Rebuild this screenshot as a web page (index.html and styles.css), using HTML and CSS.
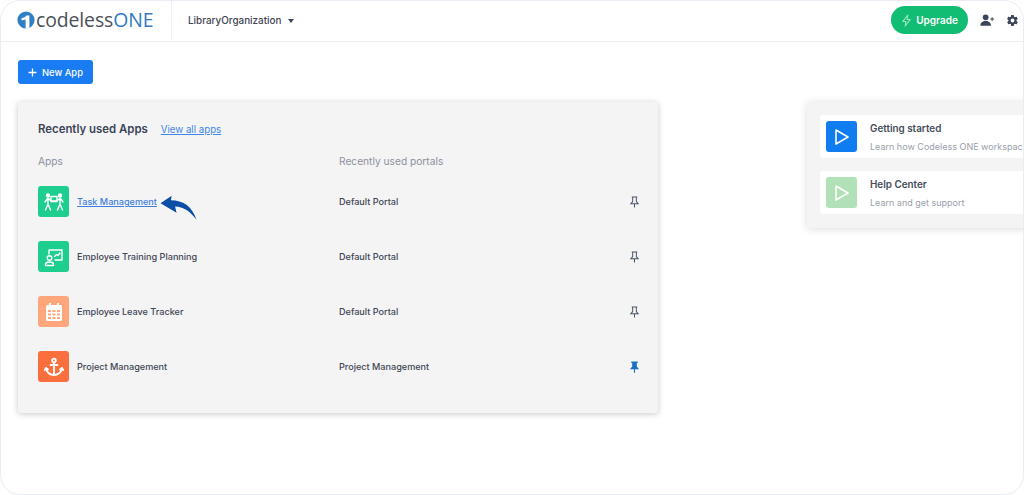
FILE: index.html
```html
<!DOCTYPE html>
<html lang="en">
<head>
<meta charset="utf-8">
<title>Codeless ONE</title>
<link rel="stylesheet" href="styles.css">
</head>
<body>
<div class="frame">
  <header class="topbar">
    <div class="logo">
      <svg class="logo-mark" viewBox="0 0 18 18"><circle cx="9" cy="9" r="8.6" fill="#2f7fc4"/><path d="M4.5 7.2 Q8 6.6 9.6 4.4 H12.4 V17.4 H8.6 V8.6 Q6.5 9.3 4.5 9.2Z" fill="#fff"/></svg>
      <span class="logo-text">codeless<span class="logo-one">ONE</span></span>
    </div>
    <div class="org">
      <span class="org-name">LibraryOrganization</span>
      <span class="caret"></span>
    </div>
    <div class="top-actions">
      <button class="upgrade">
        <svg class="bolt" viewBox="0 0 12 14"><path d="M7.5 1 2 8h3.5L4.5 13 10 6H6.5Z" fill="none" stroke="#9fe8c4" stroke-width="1.1" stroke-linejoin="round"/></svg>
        Upgrade
      </button>
      <svg class="user-add" viewBox="0 0 16 13"><circle cx="6" cy="3.6" r="3.1" fill="#3b4558"/><path d="M0.3 12.6c0-3.3 2.4-5 5.7-5s5.700 1.700 5.700 5Z" fill="#3b4558"/><path d="M13 3.5v4M11 5.5h4" stroke="#3b4558" stroke-width="1.1"/></svg>
      <svg class="gear" viewBox="0 0 24 24"><path fill="#3b4558" fill-rule="evenodd" d="M19.4 13c.1-.3.1-.7.1-1s0-.7-.1-1l2.100-1.600c.2-.2.2-.4.1-.6l-2-3.500c-.1-.2-.4-.3-.6-.2l-2.500 1c-.5-.4-1.100-.7-1.700-1l-.4-2.600c0-.3-.2-.5-.5-.5h-4c-.3 0-.5.2-.5.5l-.4 2.600c-.6.3-1.200.6-1.700 1l-2.500-1c-.2-.1-.5 0-.6.2l-2 3.500c-.1.2-.1.4.1.6L4.500 11c-.1.3-.1.7-.1 1s0 .7.1 1l-2.100 1.600c-.2.2-.2.4-.1.6l2 3.500c.1.2.4.3.6.2l2.500-1c.5.4 1.100.7 1.700 1l.4 2.600c0 .3.2.5.5.5h4c.3 0 .5-.2.5-.5l.4-2.600c.6-.3 1.200-.6 1.700-1l2.500 1c.2.1.5 0 .6-.2l2-3.500c.1-.2.1-.4-.1-.6ZM12 15.500a3.500 3.500 0 1 1 0-7 3.500 3.500 0 0 1 0 7Z"/></svg>
    </div>
  </header>

  <main class="content">
    <button class="new-app"><svg class="plus" viewBox="0 0 9 9"><path d="M4.500 .5v8M.5 4.500h8" stroke="#fff" stroke-width="1.300"/></svg>New App</button>

    <div class="panels">
      <section class="card">
        <div class="card-head">
          <h2 class="card-title">Recently used Apps</h2>
          <a class="view-all" href="#">View all apps</a>
        </div>
        <div class="row labels">
          <span class="col-app">Apps</span>
          <span class="col-portal">Recently used portals</span>
        </div>

        <div class="row app">
          <div class="col-app">
            <span class="tile tile-green">
              <svg viewBox="0 0 20 20" fill="none" stroke="#fff" stroke-width="1.400" stroke-linecap="round" stroke-linejoin="round"><circle cx="4" cy="3.500" r="1.500" fill="#fff"/><circle cx="16" cy="3.500" r="1.500" fill="#fff"/><path d="M1 10l2.500-3.500h1L7 9h6l2.500-2.500h1L19 10M4 7v5l-2.500 6M4 12l2.500 6M16 7v5l-2.500 6M16 12l2.500 6"/><rect x="7" y="4.500" width="6" height="5"/></svg>
            </span>
            <a class="app-link" href="#">Task Management</a>
            <svg class="arrow" viewBox="0 0 38 26"><path fill="#0d4ea6" d="M0.500 8 12 0.500l-.8 4.600C23 5 33 11 37.500 25 30 15.500 24 12 15.500 11.500L17 18Z"/></svg>
          </div>
          <span class="col-portal">Default Portal</span>
          <svg class="pin" viewBox="0 0 12 13"><path d="M3 1h6M4 1v5L2 8.500h8L8 6V1M6 8.500V12.500" fill="none" stroke="#4a5568" stroke-width="1.100"/></svg>
        </div>

        <div class="row app">
          <div class="col-app">
            <span class="tile tile-green">
              <svg viewBox="0 0 20 20" fill="none" stroke="#fff" stroke-width="1.400" stroke-linecap="round" stroke-linejoin="round"><path d="M5 7V3h13v10h-7"/><path d="M10.500 9.500l2-2 1.500 1 2-2.500"/><circle cx="5.500" cy="11" r="2.300"/><path d="M1.500 18.500v-1c0-1.500 1.500-2.500 4-2.500s4 1 4 2.500v1Z"/></svg>
            </span>
            <span class="app-name">Employee Training Planning</span>
          </div>
          <span class="col-portal">Default Portal</span>
          <svg class="pin" viewBox="0 0 12 13"><path d="M3 1h6M4 1v5L2 8.500h8L8 6V1M6 8.500V12.500" fill="none" stroke="#4a5568" stroke-width="1.100"/></svg>
        </div>

        <div class="row app">
          <div class="col-app">
            <span class="tile tile-peach">
              <svg viewBox="0 0 20 20"><path fill="#fff" fill-rule="evenodd" d="M5 1h2v2h6V1h2v2h1.500A1.500 1.500 0 0 1 18 4.500v13a1.500 1.500 0 0 1-1.500 1.500h-13A1.500 1.500 0 0 1 2 17.500v-13A1.500 1.500 0 0 1 3.500 3H5ZM4 8v2h3V8Zm4.500 0v2h3V8ZM13 8v2h3V8ZM4 11.500v2h3v-2Zm4.500 0v2h3v-2Zm4.500 0v2h3v-2ZM4 15v2h3v-2Zm4.500 0v2h3v-2Zm4.500 0v2h3v-2Z"/></svg>
            </span>
            <span class="app-name">Employee Leave Tracker</span>
          </div>
          <span class="col-portal">Default Portal</span>
          <svg class="pin" viewBox="0 0 12 13"><path d="M3 1h6M4 1v5L2 8.500h8L8 6V1M6 8.500V12.500" fill="none" stroke="#4a5568" stroke-width="1.100"/></svg>
        </div>

        <div class="row app">
          <div class="col-app">
            <span class="tile tile-orange">
              <svg viewBox="0 0 20 20" fill="none" stroke="#fff" stroke-width="1.800" stroke-linecap="round" stroke-linejoin="round"><circle cx="10" cy="3.500" r="1.800"/><path d="M10 5.500V18M6.500 8h7M2 11c0 4 4 7 8 7s8-3 8-7M2 11l-1.200 2M2 11l2 1.500M18 11l1.200 2M18 11l-2 1.500"/></svg>
            </span>
            <span class="app-name">Project Management</span>
          </div>
          <span class="col-portal">Project Management</span>
          <svg class="pin" viewBox="0 0 12 13"><path d="M2.500 .500h7v1.500H8.500V6l2.500 3H1l2.500-3V2H2.500ZM5.400 9h1.200v3.700H5.400Z" fill="#1a6fc4"/></svg>
        </div>
      </section>

      <aside class="help">
        <div class="help-item">
          <span class="help-tile help-blue"><svg viewBox="0 0 16 18"><path d="M2 2 14 9 2 16Z" fill="none" stroke="#fff" stroke-width="1.600" stroke-linejoin="round"/></svg></span>
          <div class="help-text">
            <div class="help-title">Getting started</div>
            <div class="help-sub">Learn how Codeless ONE workspace</div>
          </div>
        </div>
        <div class="help-item">
          <span class="help-tile help-mint"><svg viewBox="0 0 16 18"><path d="M2 2 14 9 2 16Z" fill="none" stroke="#fff" stroke-width="1.600" stroke-linejoin="round"/></svg></span>
          <div class="help-text">
            <div class="help-title">Help Center</div>
            <div class="help-sub">Learn and get support</div>
          </div>
        </div>
      </aside>
    </div>
  </main>
</div>
</body>
</html>
```
FILE: styles.css
```css
* { box-sizing: border-box; }
html, body { margin: 0; padding: 0; background: #fff; }
body { font-family: Inter, "Noto Sans", sans-serif; color: #3b4558; width: 1024px; height: 495px; overflow: hidden; }

.frame {
  width: 1024px;
  height: 495px;
  border: 1px solid #e9ecf2;
  border-radius: 20px;
  overflow: hidden;
  background: #fff;
}

.topbar {
  height: 42px;
  margin-top: -1px;
  border-bottom: 1px solid #eef0f3;
  display: flex;
  align-items: center;
  padding: 0 0 1px 16px;
}
.logo { display: flex; align-items: center; width: 155px; height: 100%; flex-shrink: 0; border-right: 1px solid #f1f2f4; margin-right: 16px; }
.logo-mark { width: 18px; height: 18px; margin-right: 1px; flex-shrink: 0; }
.logo-text { font-family: "Open Sans", Lato, sans-serif; font-size: 19.4px; line-height: 18px; color: #4b4f57; letter-spacing: -0.1px; }
.logo-one { color: #2f79c7; }
.org { display: flex; align-items: center; gap: 7px; }
.org-name { font-size: 9.9px; font-weight: 500; color: #3f4654; }
.caret { width: 0; height: 0; border-left: 3.5px solid transparent; border-right: 3.5px solid transparent; border-top: 4px solid #3f4654; margin-top: 1px; }

.top-actions { margin-left: auto; display: flex; align-items: center; }
.upgrade {
  width: 77px;
  height: 28px;
  margin-right: 12px;
  background: #10bd73;
  color: #fff;
  border: 0;
  border-radius: 14px;
  font: 600 10px Inter, sans-serif;
  display: flex;
  align-items: center;
  justify-content: center;
  gap: 4px;
  padding: 0;
}
.bolt { width: 11px; height: 13px; }
.user-add { width: 15px; height: 12px; margin-right: 11px; }
.gear { width: 13px; height: 13px; margin-right: 4px; }

.content { padding: 18px 0 0 17px; }
.new-app {
  height: 24px;
  width: 75px;
  background: #1a7cf2;
  color: #fff;
  border: 0;
  border-radius: 3px;
  font: 500 9.4px Inter, sans-serif;
  display: flex;
  align-items: center;
  padding: 0 0 0 10px;
  gap: 5px;
}
.plus { width: 9px; height: 9px; }

.panels { display: flex; align-items: flex-start; margin-top: 18px; gap: 149px; }

.card {
  width: 640px;
  height: 311px;
  flex-shrink: 0;
  background: #f4f4f5;
  border-radius: 3px;
  box-shadow: 0 1px 6px rgba(0, 0, 0, .22);
  padding: 20px 18px 0 20px;
}
.card-head { display: flex; align-items: center; height: 14px; gap: 13px; }
.card-title { margin: 0; font-size: 11.4px; font-weight: 600; color: #3b4558; }
.view-all { font-size: 9.7px; color: #3f87ea; text-decoration: underline; }

.row { display: flex; align-items: center; }
.labels { margin-top: 18px; height: 14px; font-size: 10.2px; color: #8b919c; margin-bottom: 6px; }
.col-app { width: 301px; flex-shrink: 0; display: flex; align-items: center; }
.col-portal { flex: 1; }
.app { height: 55px; font-size: 9.1px; font-weight: 500; color: #3f4654; }

.tile { width: 31px; height: 31px; border-radius: 3px; display: flex; align-items: center; justify-content: center; margin-right: 8px; flex-shrink: 0; }
.tile svg { width: 20px; height: 20px; }
.tile-green { background: #1dce8f; }
.tile-peach { background: #ffa67c; }
.tile-orange { background: #fb6e3d; }

.app-link { color: #3f7fe0; text-decoration: underline; }
.arrow { width: 37px; height: 26px; margin: 12px 0 0 3px; }
.pin { width: 11px; height: 12px; flex-shrink: 0; }

.help {
  width: 280px;
  height: 126px;
  flex-shrink: 0;
  background: #f4f4f5;
  border-radius: 3px;
  box-shadow: 0 1px 8px rgba(0, 0, 0, .14);
  padding: 13px 0 0 13px;
  display: flex;
  flex-direction: column;
  gap: 13px;
}
.help-item { height: 43px; background: #fff; border-radius: 3px; display: flex; align-items: center; padding-left: 6px; gap: 13px; white-space: nowrap; }
.help-tile { width: 31px; height: 31px; border-radius: 3px; display: flex; align-items: center; justify-content: center; flex-shrink: 0; }
.help-tile svg { width: 16px; height: 18px; }
.help-blue { background: #0f7cf0; }
.help-mint { background: #b1e1b6; }
.help-title { font-size: 9.9px; font-weight: 600; color: #454c5a; margin-bottom: 7px; }
.help-sub { font-size: 9px; color: #98a0ab; }
```
